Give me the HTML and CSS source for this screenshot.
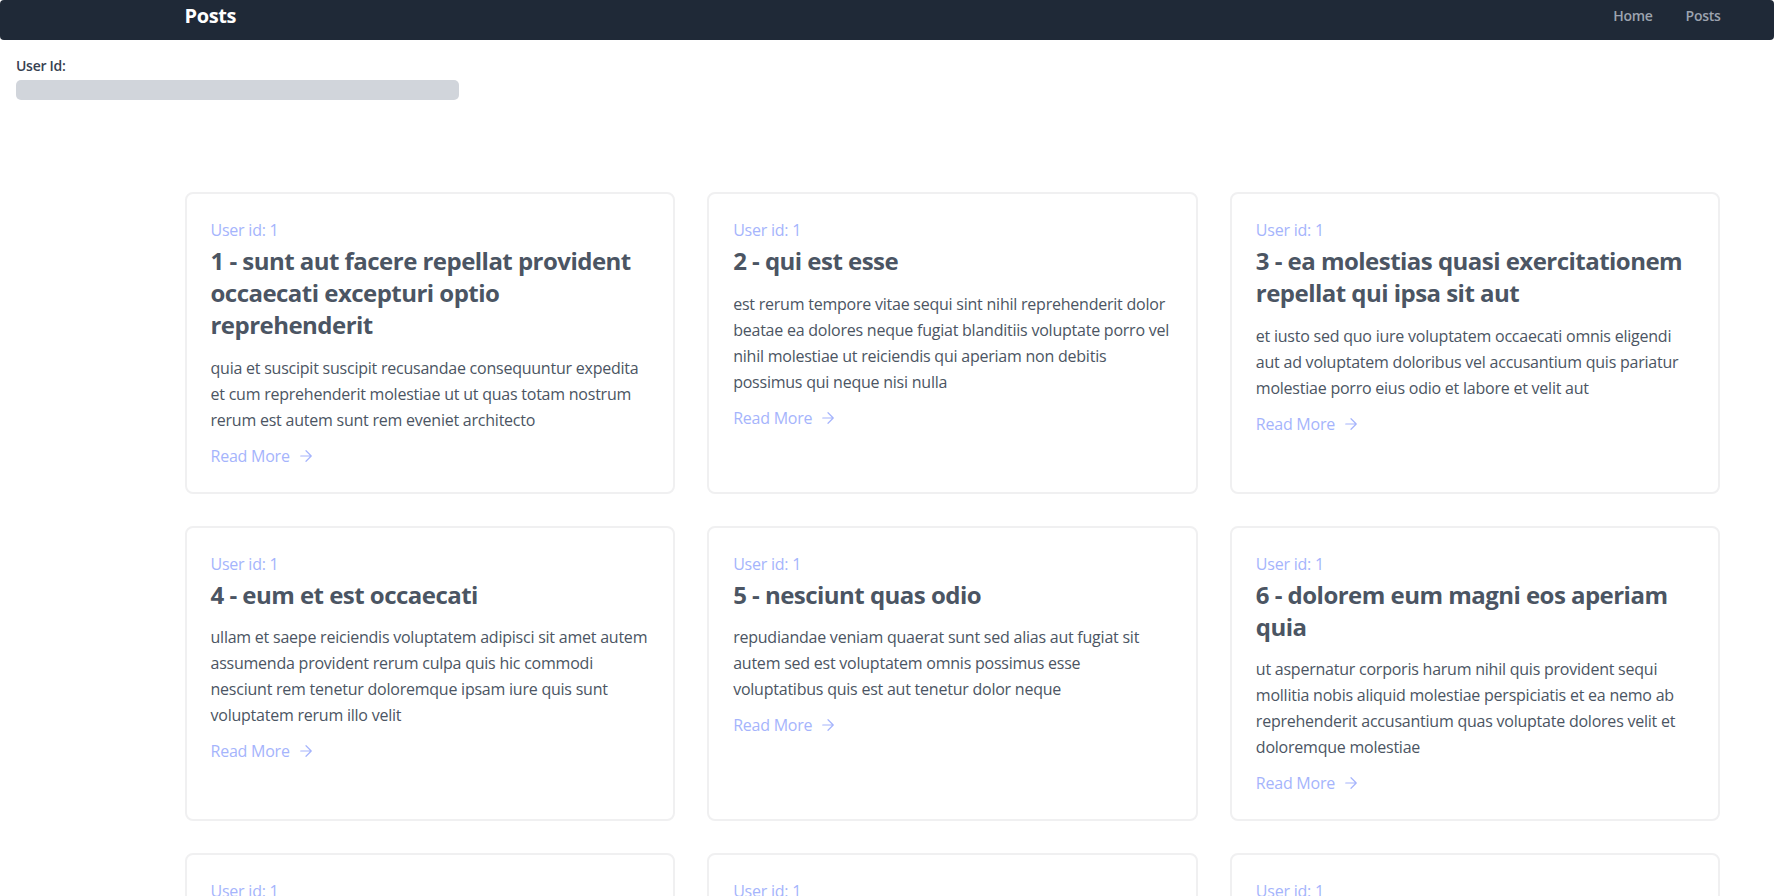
FILE: index.html
```html
<!DOCTYPE html>
<html lang="en">
<head>
<meta charset="utf-8">
<title>Posts</title>
<link rel="stylesheet" href="styles.css">
</head>
<body>
<nav class="navbar">
  <div class="nav-inner">
    <a class="brand" href="#">Posts</a>
    <div class="nav-links">
      <a class="nav-link" href="#">Home</a>
      <a class="nav-link" href="#">Posts</a>
    </div>
  </div>
</nav>

<section class="filter">
  <label class="filter-label" for="userId">User Id:</label>
  <div class="filter-input" id="userId"></div>
</section>

<main class="posts">
  <article class="card">
    <p class="user">User id: 1</p>
    <h2 class="title">1 - sunt aut facere repellat provident occaecati excepturi optio reprehenderit</h2>
    <p class="body">quia et suscipit suscipit recusandae consequuntur expedita et cum reprehenderit molestiae ut ut quas totam nostrum rerum est autem sunt rem eveniet architecto</p>
    <a class="more" href="#">Read More <svg class="arrow" viewBox="0 0 24 24" fill="none" stroke="currentColor" stroke-width="1.6" stroke-linecap="round" stroke-linejoin="round"><path d="M5 12h14M12 5l7 7-7 7"/></svg></a>
  </article>
  <article class="card">
    <p class="user">User id: 1</p>
    <h2 class="title">2 - qui est esse</h2>
    <p class="body">est rerum tempore vitae sequi sint nihil reprehenderit dolor beatae ea dolores neque fugiat blanditiis voluptate porro vel nihil molestiae ut reiciendis qui aperiam non debitis possimus qui neque nisi nulla</p>
    <a class="more" href="#">Read More <svg class="arrow" viewBox="0 0 24 24" fill="none" stroke="currentColor" stroke-width="1.6" stroke-linecap="round" stroke-linejoin="round"><path d="M5 12h14M12 5l7 7-7 7"/></svg></a>
  </article>
  <article class="card">
    <p class="user">User id: 1</p>
    <h2 class="title">3 - ea molestias quasi exercitationem repellat qui ipsa sit aut</h2>
    <p class="body">et iusto sed quo iure voluptatem occaecati omnis eligendi aut ad voluptatem doloribus vel accusantium quis pariatur molestiae porro eius odio et labore et velit aut</p>
    <a class="more" href="#">Read More <svg class="arrow" viewBox="0 0 24 24" fill="none" stroke="currentColor" stroke-width="1.6" stroke-linecap="round" stroke-linejoin="round"><path d="M5 12h14M12 5l7 7-7 7"/></svg></a>
  </article>
  <article class="card">
    <p class="user">User id: 1</p>
    <h2 class="title">4 - eum et est occaecati</h2>
    <p class="body">ullam et saepe reiciendis voluptatem adipisci sit amet autem assumenda provident rerum culpa quis hic commodi nesciunt rem tenetur doloremque ipsam iure quis sunt voluptatem rerum illo velit</p>
    <a class="more" href="#">Read More <svg class="arrow" viewBox="0 0 24 24" fill="none" stroke="currentColor" stroke-width="1.6" stroke-linecap="round" stroke-linejoin="round"><path d="M5 12h14M12 5l7 7-7 7"/></svg></a>
  </article>
  <article class="card">
    <p class="user">User id: 1</p>
    <h2 class="title">5 - nesciunt quas odio</h2>
    <p class="body">repudiandae veniam quaerat sunt sed alias aut fugiat sit autem sed est voluptatem omnis possimus esse voluptatibus quis est aut tenetur dolor neque</p>
    <a class="more" href="#">Read More <svg class="arrow" viewBox="0 0 24 24" fill="none" stroke="currentColor" stroke-width="1.6" stroke-linecap="round" stroke-linejoin="round"><path d="M5 12h14M12 5l7 7-7 7"/></svg></a>
  </article>
  <article class="card">
    <p class="user">User id: 1</p>
    <h2 class="title">6 - dolorem eum magni eos aperiam quia</h2>
    <p class="body">ut aspernatur corporis harum nihil quis provident sequi mollitia nobis aliquid molestiae perspiciatis et ea nemo ab reprehenderit accusantium quas voluptate dolores velit et doloremque molestiae</p>
    <a class="more" href="#">Read More <svg class="arrow" viewBox="0 0 24 24" fill="none" stroke="currentColor" stroke-width="1.6" stroke-linecap="round" stroke-linejoin="round"><path d="M5 12h14M12 5l7 7-7 7"/></svg></a>
  </article>
  <article class="card">
    <p class="user">User id: 1</p>
    <h2 class="title">7 - magnam facilis autem</h2>
    <p class="body">dolore placeat quibusdam ea quo vitae magni quis enim qui quis quo nemo aut saepe quidem repellat excepturi ut quia sunt ut sequi eos ea sed quas</p>
    <a class="more" href="#">Read More <svg class="arrow" viewBox="0 0 24 24" fill="none" stroke="currentColor" stroke-width="1.6" stroke-linecap="round" stroke-linejoin="round"><path d="M5 12h14M12 5l7 7-7 7"/></svg></a>
  </article>
  <article class="card">
    <p class="user">User id: 1</p>
    <h2 class="title">8 - dolorem dolore est ipsam</h2>
    <p class="body">dignissimos aperiam dolorem qui eum facilis quibusdam animi sint suscipit qui sint possimus cum quaerat magni maiores excepturi ipsam ut commodi dolor voluptatum modi aut vitae</p>
    <a class="more" href="#">Read More <svg class="arrow" viewBox="0 0 24 24" fill="none" stroke="currentColor" stroke-width="1.6" stroke-linecap="round" stroke-linejoin="round"><path d="M5 12h14M12 5l7 7-7 7"/></svg></a>
  </article>
  <article class="card">
    <p class="user">User id: 1</p>
    <h2 class="title">9 - nesciunt iure omnis dolorem tempora et accusantium</h2>
    <p class="body">consectetur animi nesciunt iure dolore enim quia ad veniam autem ut quam aut nobis et est aut quod aut provident voluptas autem voluptas</p>
    <a class="more" href="#">Read More <svg class="arrow" viewBox="0 0 24 24" fill="none" stroke="currentColor" stroke-width="1.6" stroke-linecap="round" stroke-linejoin="round"><path d="M5 12h14M12 5l7 7-7 7"/></svg></a>
  </article>
</main>
</body>
</html>
```
FILE: styles.css
```css
* { box-sizing: border-box; }

html, body {
  margin: 0;
  padding: 0;
  background: #ffffff;
  font-family: "Open Sans", "Noto Sans", sans-serif;
  overflow: hidden;
}

a { text-decoration: none; }

.navbar {
  height: 40px;
  background: #1f2937;
  border-radius: 4px;
  padding-top: 2px;
}

.nav-inner {
  width: 1536px;
  margin-left: 184.5px;
  display: flex;
  align-items: center;
  justify-content: space-between;
  height: 28px;
}

.brand {
  color: #ffffff;
  font-size: 20px;
  font-weight: 700;
  line-height: 28px;
  letter-spacing: -0.4px;
}

.nav-links {
  display: flex;
  gap: 33px;
}

.nav-link {
  color: #9ca3af;
  font-size: 14px;
  font-weight: 600;
  line-height: 20px;
  letter-spacing: -0.28px;
}

.filter {
  padding: 16px 16px 0;
  display: flex;
  flex-direction: column;
  gap: 4px;
}

.filter-label {
  font-size: 14px;
  line-height: 20px;
  font-weight: 600;
  color: #374151;
  letter-spacing: -0.28px;
}

.filter-input {
  width: 443px;
  height: 20px;
  background: #d1d5db;
  border-radius: 5px;
}

.posts {
  width: 1536px;
  margin: 92px 0 0 184.5px;
  display: grid;
  grid-template-columns: repeat(3, 1fr);
  gap: 32px;
}

.card {
  border: 2px solid #f0f0f1;
  border-radius: 8px;
  padding: 24px;
  display: flex;
  flex-direction: column;
  align-items: flex-start;
}

.user {
  margin: 0 0 3px;
  font-size: 16px;
  line-height: 24px;
  font-weight: 500;
  letter-spacing: -0.23px;
  color: #a5b4fc;
}

.title {
  margin: 0 0 13.5px;
  font-size: 24px;
  line-height: 32px;
  font-weight: 700;
  letter-spacing: -0.53px;
  color: #4b5563;
}

.body {
  margin: 0 0 11px;
  font-size: 16px;
  line-height: 26px;
  letter-spacing: -0.23px;
  color: #4b5563;
}

.more {
  display: inline-flex;
  align-items: center;
  font-size: 16px;
  line-height: 24px;
  letter-spacing: -0.23px;
  color: #a5b4fc;
}

.arrow {
  width: 18px;
  height: 18px;
  margin-left: 7px;
}
```
